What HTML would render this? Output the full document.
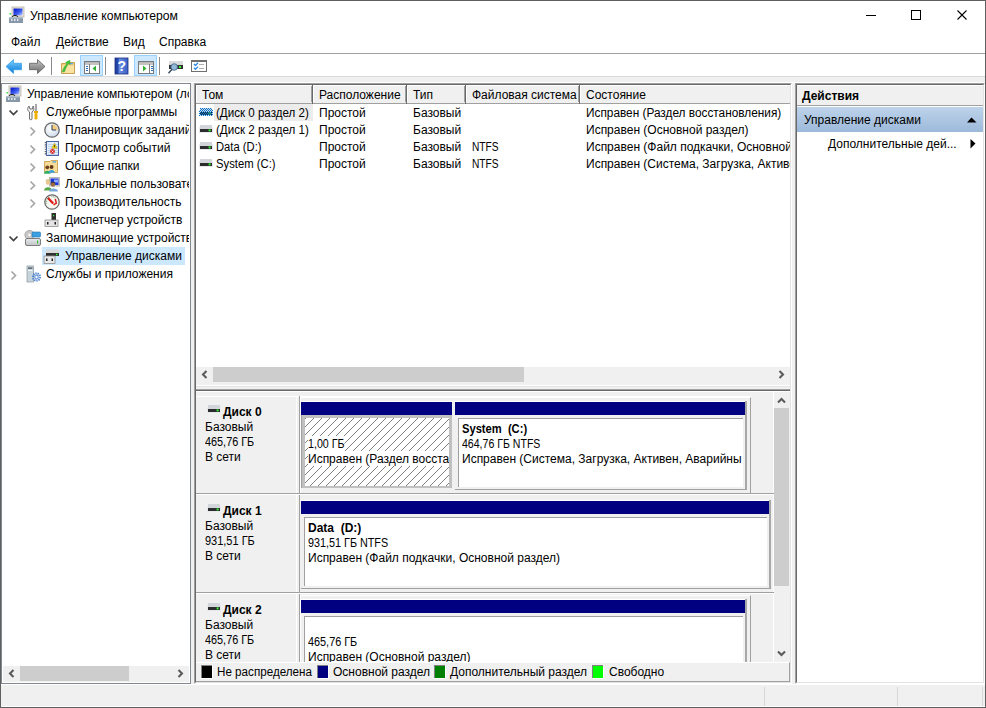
<!DOCTYPE html>
<html><head><meta charset="utf-8">
<style>
*{margin:0;padding:0;box-sizing:border-box}
html,body{width:986px;height:708px;overflow:hidden;background:#f0f0f0;font-family:"Liberation Sans",sans-serif;font-size:12px;color:#000}
.a{position:absolute}
.t{position:absolute;white-space:nowrap;line-height:14px}
.b{font-weight:bold}
.clip{position:absolute;overflow:hidden}
svg{position:absolute;overflow:visible}
</style></head><body>

<!-- ===== title/menu/toolbar ===== -->
<div class="a" style="left:0;top:0;width:986px;height:76px;background:#fff"></div>
<div class="a" style="left:0;top:76px;width:986px;height:1px;background:#dadada"></div>
<div class="t" style="left:30px;top:9px;transform:scaleX(1.017);transform-origin:0 0">Управление компьютером</div>
<div class="a" style="left:866px;top:15px;width:10px;height:1px;background:#000"></div>
<div class="a" style="left:911px;top:10px;width:10px;height:10px;border:1px solid #000"></div>
<svg style="left:957px;top:10px" width="10" height="10"><path d="M0.5 0.5L9.5 9.5M9.5 0.5L0.5 9.5" stroke="#000" stroke-width="1.1"/></svg>

<div class="t" style="left:11px;top:35px">Файл</div>
<div class="t" style="left:56px;top:35px">Действие</div>
<div class="t" style="left:123px;top:35px">Вид</div>
<div class="t" style="left:159px;top:35px">Справка</div>
<div class="a" style="left:0;top:53px;width:986px;height:1px;background:#a0a0a0"></div>

<!-- toolbar icons -->
<svg style="left:0;top:54px" width="220" height="22">
 <defs>
  <linearGradient id="gb" x1="0" y1="0" x2="0" y2="1"><stop offset="0" stop-color="#7cd0ff"/><stop offset="1" stop-color="#0a78d8"/></linearGradient>
  <linearGradient id="gg" x1="0" y1="0" x2="0" y2="1"><stop offset="0" stop-color="#c8c8c8"/><stop offset="1" stop-color="#6a6a6a"/></linearGradient>
  <linearGradient id="gh" x1="0" y1="0" x2="1" y2="0"><stop offset="0" stop-color="#1c3a9a"/><stop offset="0.25" stop-color="#2a4cb0"/><stop offset="0.3" stop-color="#6a8ee0"/><stop offset="1" stop-color="#3a60c8"/></linearGradient>
 </defs>
 <!-- back -->
 <path d="M6 12.5L13.5 5.5V9.3H21.5V15.7H13.5V19.5Z" fill="url(#gb)" stroke="#3aa0e8" stroke-width="0.8"/>
 <!-- forward -->
 <path d="M45 12.5L37.5 5.5V9.3H29.5V15.7H37.5V19.5Z" fill="url(#gg)" stroke="#606060" stroke-width="0.8"/>
 <rect x="51" y="3" width="1" height="18" fill="#8a8a8a"/>
 <!-- folder up -->
 <path d="M61.5 9.5H65.5L66.5 8.5H74.5V19.5H61.5Z" fill="#f0cf78" stroke="#c39a48" stroke-width="0.9"/>
 <rect x="62" y="11.5" width="12" height="7.5" fill="#f9e2a2"/>
 <rect x="70" y="9" width="3" height="1.3" fill="#5aa8f0"/>
 <path d="M62.3 17.8C63.2 14.5 64.8 12 67 9.8L65.6 8.6L69.8 6.2L70 10.6L68.6 9.6C67 11.5 65.6 14.2 64.5 17.8Z" fill="#3cc83c" stroke="#2a9a2a" stroke-width="0.5"/>
 <!-- highlighted btn 1 -->
 <rect x="80.5" y="1.5" width="22" height="20" fill="#cce8ff" stroke="#99d1ff"/>
 <rect x="84.5" y="7.5" width="15" height="12" fill="#fff" stroke="#7a7a7a"/>
 <rect x="85" y="8" width="14" height="1" fill="#b8b8b8"/><rect x="85" y="9.5" width="14" height="1" fill="#8a8a8a"/>
 <rect x="89" y="10" width="1" height="9" fill="#7a7a7a"/>
 <rect x="86" y="12" width="2" height="1" fill="#3070c0"/><rect x="86" y="14" width="2" height="1" fill="#3070c0"/><rect x="86" y="16" width="2" height="1" fill="#3070c0"/>
 <path d="M92.5 14.5L96 11.5V17.5Z" fill="#30b030"/>
 <rect x="105" y="3" width="1" height="18" fill="#8a8a8a"/>
 <!-- help -->
 <rect x="115" y="4" width="13" height="16" fill="url(#gh)" stroke="#1a2f80" stroke-width="0.8"/>
 <text x="121.8" y="17.3" font-family="Liberation Sans" font-weight="bold" font-size="14" fill="#fff" text-anchor="middle">?</text>
 <!-- highlighted btn 2 -->
 <rect x="134.5" y="1.5" width="22" height="20" fill="#cce8ff" stroke="#99d1ff"/>
 <rect x="138.5" y="7.5" width="15" height="12" fill="#fff" stroke="#7a7a7a"/>
 <rect x="139" y="8" width="14" height="1" fill="#b8b8b8"/><rect x="139" y="9.5" width="14" height="1" fill="#8a8a8a"/>
 <rect x="149" y="10" width="1" height="9" fill="#7a7a7a"/>
 <rect x="151" y="12" width="2" height="1" fill="#3070c0"/><rect x="151" y="14" width="2" height="1" fill="#3070c0"/><rect x="151" y="16" width="2" height="1" fill="#3070c0"/>
 <path d="M143 11.5L146.5 14.5L143 17.5Z" fill="#30b030"/>
 <rect x="159" y="3" width="1" height="18" fill="#8a8a8a"/>
 <!-- disk search -->
 <rect x="169" y="7" width="14" height="4" fill="#d8dadc"/>
 <rect x="169" y="11" width="14" height="4" fill="#303030"/>
 <rect x="179" y="12" width="2" height="2" fill="#30ff30"/>
 <circle cx="174.2" cy="13" r="3.3" fill="#90b8d8" stroke="#4a6a8a" stroke-width="0.9"/>
 <path d="M172 15.3L168.5 19.3" stroke="#3a4a5a" stroke-width="1.4"/>
 <!-- checklist -->
 <rect x="191.5" y="6.5" width="15" height="11" fill="#fff" stroke="#707070"/>
 <rect x="191" y="6" width="16" height="2" fill="#707070"/>
 <path d="M194 10L195.5 11.5L198 8.8M194 13.8L195.5 15.3L198 12.6" stroke="#2a8ae8" stroke-width="1.3" fill="none"/>
 <rect x="199" y="10" width="5" height="1" fill="#b0b0b0"/><rect x="199" y="14" width="5" height="1" fill="#b0b0b0"/>
</svg>
<!-- title icon -->
<svg style="left:8px;top:6px" width="18" height="18">
 <defs><linearGradient id="scr" x1="0" y1="0" x2="1" y2="1"><stop offset="0" stop-color="#0010c0"/><stop offset="0.6" stop-color="#4060f0"/><stop offset="1" stop-color="#c0d0ff"/></linearGradient></defs>
 <rect x="4" y="1" width="12" height="10" fill="#e8e4d8" stroke="#b8b4a8" stroke-width="0.8"/>
 <rect x="5.5" y="2.5" width="9" height="7" fill="url(#scr)"/>
 <rect x="1" y="11" width="14" height="6" fill="#8898a8"/>
 <rect x="1" y="11" width="14" height="1.5" fill="#b0c0cc"/>
 <rect x="3" y="13" width="1.5" height="2" fill="#e0e8f0"/><rect x="6" y="13" width="1.5" height="2" fill="#e0e8f0"/><rect x="9" y="13" width="1.5" height="2" fill="#e0e8f0"/>
 <rect x="1.5" y="7" width="1.5" height="1.5" fill="#40e040"/>
 <path d="M4 11C5 9 9 9 10 11" stroke="#101010" stroke-width="1" fill="none"/>
</svg>

<!-- ===== left tree pane ===== -->
<div class="a" style="left:0;top:82px;width:986px;height:1px;background:#fff"></div>
<div class="a" style="left:1px;top:83px;width:190px;height:601px;background:#fff;border:1px solid #828790"></div>
<div class="clip" style="left:2px;top:84px;width:187px;height:581px">
  <div class="a" style="left:40px;top:163px;width:143px;height:18px;background:#cce8ff"></div>
  <div class="t" style="left:25px;top:3px">Управление компьютером (локальным)</div>
  <div class="t" style="left:44px;top:21px">Служебные программы</div>
  <div class="t" style="left:63px;top:39px">Планировщик заданий</div>
  <div class="t" style="left:63px;top:57px">Просмотр событий</div>
  <div class="t" style="left:63px;top:75px">Общие папки</div>
  <div class="t" style="left:63px;top:93px">Локальные пользователи и группы</div>
  <div class="t" style="left:63px;top:111px">Производительность</div>
  <div class="t" style="left:63px;top:129px">Диспетчер устройств</div>
  <div class="t" style="left:44px;top:147px">Запоминающие устройства</div>
  <div class="t" style="left:63px;top:165px">Управление дисками</div>
  <div class="t" style="left:44px;top:183px">Службы и приложения</div>
</div>
<!-- tree icons -->
<svg style="left:0;top:0" width="190" height="290">
 <defs>
  <linearGradient id="scr2" x1="0" y1="0" x2="1" y2="1"><stop offset="0" stop-color="#0010c0"/><stop offset="0.6" stop-color="#4060f0"/><stop offset="1" stop-color="#c0d0ff"/></linearGradient>
  <radialGradient id="clk" cx="0.4" cy="0.4" r="0.7"><stop offset="0" stop-color="#ffffff"/><stop offset="1" stop-color="#c8d8e8"/></radialGradient>
  <linearGradient id="drv" x1="0" y1="0" x2="0" y2="1"><stop offset="0" stop-color="#e8eaec"/><stop offset="1" stop-color="#c0c4c8"/></linearGradient>
 </defs>
 <!-- row0 computer mgmt icon x6-22 y86-102 -->
 <g transform="translate(5,85)">
 <rect x="4" y="1" width="12" height="10" fill="#e8e4d8" stroke="#b8b4a8" stroke-width="0.8"/>
 <rect x="5.5" y="2.5" width="9" height="7" fill="url(#scr2)"/>
 <rect x="1" y="11" width="14" height="6" fill="#8898a8"/>
 <rect x="1" y="11" width="14" height="1.5" fill="#b0c0cc"/>
 <rect x="3" y="13" width="1.5" height="2" fill="#e0e8f0"/><rect x="6" y="13" width="1.5" height="2" fill="#e0e8f0"/><rect x="9" y="13" width="1.5" height="2" fill="#e0e8f0"/>
 <rect x="1.5" y="7" width="1.5" height="1.5" fill="#40e040"/>
 <path d="M4 11C5 9 9 9 10 11" stroke="#101010" stroke-width="1" fill="none"/>
 </g>
 <!-- chevrons down -->
 <path d="M9.5 110.5L13.5 114.5L17.5 110.5" stroke="#404040" stroke-width="1.7" fill="none"/>
 <path d="M9.5 236.5L13.5 240.5L17.5 236.5" stroke="#404040" stroke-width="1.7" fill="none"/>
 <!-- chevrons right -->
 <path d="M30.5 127.5L34.5 131.5L30.5 135.5" stroke="#a6a6a6" stroke-width="1.7" fill="none"/>
 <path d="M30.5 145.5L34.5 149.5L30.5 153.5" stroke="#a6a6a6" stroke-width="1.7" fill="none"/>
 <path d="M30.5 163.5L34.5 167.5L30.5 171.5" stroke="#a6a6a6" stroke-width="1.7" fill="none"/>
 <path d="M30.5 181.5L34.5 185.5L30.5 189.5" stroke="#a6a6a6" stroke-width="1.7" fill="none"/>
 <path d="M30.5 199.5L34.5 203.5L30.5 207.5" stroke="#a6a6a6" stroke-width="1.7" fill="none"/>
 <path d="M11.5 271.5L15.5 275.5L11.5 279.5" stroke="#a6a6a6" stroke-width="1.7" fill="none"/>
 <!-- tools icon -->
 <path d="M29 106C27 108 27.5 111 29.5 112V119C29.5 120 32 120 32 119V112C34 111 34.5 108 33 106L32.5 109H30L29 106Z" fill="#f4f4f4" stroke="#606060" stroke-width="0.9"/>
 <rect x="35.5" y="104" width="1" height="7" fill="#505050"/>
 <rect x="34" y="111" width="4" height="2" fill="#e8a800"/>
 <rect x="34.5" y="113" width="3" height="6.5" rx="1" fill="#f0b400"/>
 <!-- clock -->
 <circle cx="52" cy="130" r="7.2" fill="url(#clk)" stroke="#6a6a6a" stroke-width="1.3"/>
 <path d="M52 130V124.2A5.8 5.8 0 0 1 57.8 130Z" fill="#f4cc80"/>
 <path d="M52 125V130H56" stroke="#2a4060" stroke-width="1" fill="none"/>
 <!-- event viewer -->
 <rect x="46.5" y="141.5" width="12" height="14" fill="#e4eefa" stroke="#4a66a8"/>
 <path d="M48 144.5H58M48 146.5H58M48 148.5H58M48 150.5H58M48 152.5H58M48 154.5H58" stroke="#b8cce8" stroke-width="0.8"/>
 <path d="M45.5 142V155" stroke="#606060" stroke-width="1.6" stroke-dasharray="0.9 0.9"/>
 <path d="M54.5 143.2L57.2 148.3H51.8Z" fill="#f4d400" stroke="#b09000" stroke-width="0.5"/>
 <rect x="54.2" y="145" width="0.8" height="2.2" fill="#303030"/>
 <circle cx="52.5" cy="151.5" r="2.4" fill="#d82828"/>
 <path d="M51.5 150.5L53.5 152.5M53.5 150.5L51.5 152.5" stroke="#fff" stroke-width="0.7"/>
 <!-- shared folders -->
 <path d="M44.5 161.5H50L51 160.5H57.5V172.5H44.5Z" fill="#f6dc96" stroke="#c8a050" stroke-width="0.9"/>
 <rect x="52.5" y="161.3" width="3.5" height="1.2" fill="#3aa0f0"/>
 <circle cx="47.3" cy="167.3" r="1.9" fill="#704020"/>
 <path d="M44 173.8C44 169.8 50.6 169.8 50.6 173.8Z" fill="#30b060"/>
 <circle cx="51.6" cy="167" r="1.9" fill="#603818"/>
 <path d="M48.5 172.8C48.5 169 54.7 169 54.7 172.8Z" fill="#38a0e0"/>
 <!-- local users -->
 <rect x="49.5" y="177.5" width="10" height="8.5" fill="#e0ddd0" stroke="#b0b0a8" stroke-width="0.8"/>
 <rect x="50.5" y="178.5" width="8" height="6.5" fill="#1838e0"/>
 <rect x="54" y="179.5" width="4" height="3" fill="#90a8ff"/>
 <circle cx="48" cy="182.5" r="2.2" fill="#e8c890"/>
 <path d="M45.5 180.8C46.5 179.5 49.5 179.5 50.3 181" stroke="#c8b060" stroke-width="1" fill="none"/>
 <path d="M44 190.5C44 186 52 186 52 190.5Z" fill="#58a848"/>
 <circle cx="53" cy="184.5" r="2.2" fill="#9a6a40"/>
 <path d="M50.8 183.2C51.5 181.8 54.5 181.8 55.2 183.2" stroke="#403020" stroke-width="1" fill="none"/>
 <path d="M49 191.5C49 187.5 58 187.5 58 191.5Z" fill="#78a8d8"/>
 <!-- performance -->
 <circle cx="52" cy="202" r="7.2" fill="#f8f6f0" stroke="#6a6a6a" stroke-width="1.3"/>
 <path d="M47.8 197.8L53.2 203.5" stroke="#e01818" stroke-width="2.2"/>
 <path d="M55.3 199L56.3 203.2L53.5 204.8" stroke="#e01818" stroke-width="1.5" fill="none"/>
 <path d="M46.8 203.5A5.3 5.3 0 0 1 49.5 197.2M51.5 196.7A5.3 5.3 0 0 1 55.5 198" stroke="#509a68" stroke-width="1" fill="none" stroke-dasharray="0.8 0.8"/>
 <!-- device manager -->
 <rect x="51.5" y="213" width="4.5" height="7" fill="#303030"/>
 <rect x="53" y="215" width="1.2" height="1.2" fill="#30ff30"/>
 <rect x="45" y="220" width="13" height="6.5" fill="#e4e4e4" stroke="#909090" stroke-width="0.8"/>
 <rect x="47" y="222" width="1.5" height="2.5" fill="#202020"/><rect x="54.5" y="222" width="1.5" height="2.5" fill="#202020"/>
 <!-- storage -->
 <circle cx="29.5" cy="235" r="4.6" fill="#c8c8c8" stroke="#909090" stroke-width="0.7"/>
 <circle cx="29.5" cy="235" r="1.2" fill="#fff"/>
 <rect x="32" y="232" width="8.5" height="5" rx="1" fill="#3aa0e0" stroke="#2070b0" stroke-width="0.6"/>
 <rect x="25.5" y="238.5" width="15" height="7" rx="1.5" fill="url(#drv)" stroke="#707070" stroke-width="0.9"/>
 <rect x="37" y="240.5" width="1.2" height="3" fill="#30c030"/>
 <!-- disk mgmt (selected) -->
 <rect x="46" y="249.5" width="13" height="3.5" fill="#d8d8d8"/>
 <rect x="46" y="253" width="13" height="3" fill="#303030"/>
 <rect x="56" y="253.8" width="1.5" height="1.5" fill="#30ff30"/>
 <rect x="44" y="256" width="11" height="7.5" fill="#e8e8e8" stroke="#909090" stroke-width="0.8"/>
 <rect x="46" y="258.5" width="1.5" height="2.5" fill="#202020"/><rect x="51.5" y="258.5" width="1.5" height="2.5" fill="#202020"/>
 <!-- services -->
 <rect x="27" y="266" width="6.5" height="16" fill="#c8d4dc" stroke="#8898a0" stroke-width="0.7"/>
 <rect x="28" y="267.5" width="4.5" height="1.2" fill="#404850"/>
 <rect x="28" y="270" width="4.5" height="0.8" fill="#fff"/>
 <circle cx="36.5" cy="277" r="3.6" fill="none" stroke="#4a80d0" stroke-width="2" stroke-dasharray="1.3 0.9"/>
 <circle cx="36.5" cy="277" r="2.4" fill="#6a9ae0"/>
 <circle cx="36.5" cy="277" r="1.2" fill="#fff"/>
</svg>
<!-- left h scrollbar -->
<div class="a" style="left:3px;top:666px;width:186px;height:16px;background:#f0f0f0"></div>
<div class="a" style="left:20px;top:666px;width:109px;height:15px;background:#cdcdcd"></div>

<!-- ===== middle pane ===== -->
<div class="a" style="left:194px;top:83px;width:598px;height:601px;background:#fff;border:1px solid;border-color:#a0a0a0 #fff #fff #a0a0a0"><div class="a" style="left:0;top:0;right:0;bottom:0;border:1px solid;border-color:#696969 #e3e3e3 #e3e3e3 #696969"></div></div>
<!-- header -->
<div class="a" style="left:196px;top:85px;width:594px;height:19px;background:#f0f0f0;border-top:1px solid #fff;border-bottom:1px solid #696969"><div class="a" style="left:0;top:17px;width:594px;height:1px;background:#a0a0a0"></div></div>
<div class="a" style="left:196px;top:85px;width:1px;height:17px;background:#fff"></div>
<div class="a" style="left:311px;top:86px;width:1px;height:16px;background:#a0a0a0"></div>
<div class="a" style="left:312px;top:85px;width:1px;height:19px;background:#696969"></div>
<div class="a" style="left:313px;top:85px;width:1px;height:17px;background:#fff"></div>
<div class="a" style="left:405px;top:86px;width:1px;height:16px;background:#a0a0a0"></div>
<div class="a" style="left:406px;top:85px;width:1px;height:19px;background:#696969"></div>
<div class="a" style="left:407px;top:85px;width:1px;height:17px;background:#fff"></div>
<div class="a" style="left:464px;top:86px;width:1px;height:16px;background:#a0a0a0"></div>
<div class="a" style="left:465px;top:85px;width:1px;height:19px;background:#696969"></div>
<div class="a" style="left:466px;top:85px;width:1px;height:17px;background:#fff"></div>
<div class="a" style="left:578px;top:86px;width:1px;height:16px;background:#a0a0a0"></div>
<div class="a" style="left:579px;top:85px;width:1px;height:19px;background:#696969"></div>
<div class="a" style="left:580px;top:85px;width:1px;height:17px;background:#fff"></div>
<div class="t" style="left:202px;top:88px">Том</div>
<div class="t" style="left:319px;top:88px">Расположение</div>
<div class="t" style="left:413px;top:88px">Тип</div>
<div class="t" style="left:472px;top:88px">Файловая система</div>
<div class="t" style="left:586px;top:88px">Состояние</div>
<!-- rows -->
<div class="clip" style="left:196px;top:104px;width:594px;height:262px">
  <div class="a" style="left:18px;top:0;width:99px;height:17px;background:#ececec"></div>
  <div class="t" style="transform:scaleX(0.965);transform-origin:0 0;left:20px;top:2px">(Диск 0 раздел 2)</div>
  <div class="t" style="transform:scaleX(0.965);transform-origin:0 0;left:20px;top:19px">(Диск 2 раздел 1)</div>
  <div class="t" style="transform:scaleX(0.935);transform-origin:0 0;left:20px;top:36px">Data (D:)</div>
  <div class="t" style="transform:scaleX(0.94);transform-origin:0 0;left:20px;top:53px">System (C:)</div>
  <div class="t" style="left:123px;top:2px">Простой</div>
  <div class="t" style="left:123px;top:19px">Простой</div>
  <div class="t" style="left:123px;top:36px">Простой</div>
  <div class="t" style="left:123px;top:53px">Простой</div>
  <div class="t" style="left:217px;top:2px">Базовый</div>
  <div class="t" style="left:217px;top:19px">Базовый</div>
  <div class="t" style="left:217px;top:36px">Базовый</div>
  <div class="t" style="left:217px;top:53px">Базовый</div>
  <div class="t" style="transform:scaleX(0.85);transform-origin:0 0;left:276px;top:36px">NTFS</div>
  <div class="t" style="transform:scaleX(0.85);transform-origin:0 0;left:276px;top:53px">NTFS</div>
  <div class="t" style="transform:scaleX(0.985);transform-origin:0 0;left:390px;top:2px">Исправен (Раздел восстановления)</div>
  <div class="t" style="left:390px;top:19px">Исправен (Основной раздел)</div>
  <div class="t" style="left:390px;top:36px">Исправен (Файл подкачки, Основной раздел)</div>
  <div class="t" style="left:390px;top:53px">Исправен (Система, Загрузка, Активен, Аварийный дамп, Основной раздел)</div>
</div>
<!-- list h scrollbar -->
<div class="a" style="left:196px;top:367px;width:594px;height:18px;background:#f0f0f0"></div>
<div class="a" style="left:213px;top:367px;width:311px;height:15px;background:#cdcdcd"></div>
<div class="a" style="left:196px;top:385px;width:594px;height:1px;background:#fff"></div>
<div class="a" style="left:196px;top:386px;width:594px;height:1px;background:#e3e3e3"></div>
<div class="a" style="left:196px;top:387px;width:594px;height:2px;background:#f0f0f0"></div>
<div class="a" style="left:196px;top:389px;width:594px;height:1px;background:#a0a0a0"></div>
<div class="a" style="left:196px;top:390px;width:594px;height:1px;background:#696969"></div>
<div class="a" style="left:196px;top:391px;width:594px;height:1px;background:#fff"></div>
<div class="a" style="left:196px;top:392px;width:594px;height:290px;background:#f0f0f0"></div>

<!-- ===== disk view ===== -->
<div class="clip" style="left:196px;top:392px;width:578px;height:270px;background:#f0f0f0">
 <!-- row 0 -->
 <div class="a" style="left:0;top:4px;width:555px;height:1px;background:#fff"></div>
 <div class="a" style="left:577px;top:0;width:1px;height:270px;background:#fff"></div>
 <div class="a" style="left:100px;top:4px;width:1px;height:97px;background:#fff"></div>
 <div class="a" style="left:103px;top:4px;width:1px;height:97px;background:#a0a0a0"></div>
 <div class="a" style="left:0;top:101px;width:578px;height:1px;background:#a0a0a0"></div>
 <div class="a" style="left:0;top:102px;width:578px;height:1px;background:#fff"></div>
 <div class="a" style="left:104px;top:5px;width:451px;height:96px;border-left:1px solid #fff;border-top:1px solid #fff;border-right:1px solid #a0a0a0"></div>
 <!-- row 1 -->
 <div class="a" style="left:100px;top:103px;width:1px;height:97px;background:#fff"></div>
 <div class="a" style="left:103px;top:103px;width:1px;height:97px;background:#a0a0a0"></div>
 <div class="a" style="left:0;top:200px;width:578px;height:1px;background:#a0a0a0"></div>
 <div class="a" style="left:0;top:201px;width:578px;height:1px;background:#fff"></div>
 <div class="a" style="left:577px;top:103px;width:1px;height:97px;background:#fff"></div>
 <!-- row 2 -->
 <div class="a" style="left:100px;top:202px;width:1px;height:97px;background:#fff"></div>
 <div class="a" style="left:103px;top:202px;width:1px;height:97px;background:#a0a0a0"></div>
 <div class="a" style="left:104px;top:203px;width:451px;height:96px;border-left:1px solid #fff;border-top:1px solid #fff;border-right:1px solid #a0a0a0"></div>

 <!-- labels -->
 <div class="t b" style="left:27px;top:13px">Диск 0</div>
 <div class="t" style="left:9px;top:28px">Базовый</div>
 <div class="t" style="transform:scaleX(0.905);transform-origin:0 0;left:9px;top:43px">465,76 ГБ</div>
 <div class="t" style="left:9px;top:58px">В сети</div>
 <div class="t b" style="left:27px;top:112px">Диск 1</div>
 <div class="t" style="left:9px;top:127px">Базовый</div>
 <div class="t" style="transform:scaleX(0.915);transform-origin:0 0;left:9px;top:142px">931,51 ГБ</div>
 <div class="t" style="left:9px;top:157px">В сети</div>
 <div class="t b" style="left:27px;top:211px">Диск 2</div>
 <div class="t" style="left:9px;top:226px">Базовый</div>
 <div class="t" style="transform:scaleX(0.905);transform-origin:0 0;left:9px;top:241px">465,76 ГБ</div>
 <div class="t" style="left:9px;top:256px">В сети</div>

 <!-- disk0 p1 (selected hatched) -->
 <div class="a" style="left:104px;top:9px;width:153px;height:1px;background:#fff"></div>
 <div class="a" style="left:105px;top:10px;width:151px;height:13px;background:#000080"></div>
 <div class="a" style="left:105px;top:23px;width:151px;height:73px;background:#c0c0c0;border-left:1px solid #a0a0a0"></div>
 <svg style="left:109px;top:26px" width="144" height="68"><defs><pattern id="h" width="8" height="8" patternUnits="userSpaceOnUse" x="1" y="0"><g fill="#808080"><rect x="0" y="7" width="1" height="1"/><rect x="1" y="6" width="1" height="1"/><rect x="2" y="5" width="1" height="1"/><rect x="3" y="4" width="1" height="1"/><rect x="4" y="3" width="1" height="1"/><rect x="5" y="2" width="1" height="1"/><rect x="6" y="1" width="1" height="1"/><rect x="7" y="0" width="1" height="1"/></g></pattern></defs><rect width="144" height="68" fill="#fff"/><rect width="144" height="68" fill="url(#h)"/></svg>
 <div class="clip" style="left:109px;top:26px;width:144px;height:68px">
  <div class="t" style="transform:scaleX(0.89);transform-origin:0 0;left:3px;top:18px;padding-top:1px;height:15px;background:#fff">1,00 ГБ</div>
  <div class="t" style="left:3px;top:33px;padding-top:1px;height:15px;background:#fff">Исправен (Раздел восстановления)</div>
 </div>
 <!-- disk0 p2 -->
 <div class="a" style="left:258px;top:9px;width:292px;height:1px;background:#fff"></div>
 <div class="a" style="left:259px;top:10px;width:290px;height:13px;background:#000080"></div>
 <div class="a" style="left:549px;top:9px;width:2px;height:89px;background:#a8a8a8"></div>
 <div class="a" style="left:259px;top:97px;width:292px;height:1px;background:#a0a0a0"></div>
 <div class="a" style="left:262px;top:26px;width:285px;height:69px;background:#fff;border-left:1px solid #a0a0a0;border-top:1px solid #a0a0a0"></div>
 <div class="clip" style="left:263px;top:27px;width:284px;height:68px">
  <div class="t b" style="transform:scaleX(0.93);transform-origin:0 0;left:3px;top:3px">System&nbsp; (C:)</div>
  <div class="t" style="transform:scaleX(0.88);transform-origin:0 0;left:3px;top:18px">464,76 ГБ NTFS</div>
  <div class="t" style="left:3px;top:33px">Исправен (Система, Загрузка, Активен, Аварийны</div>
 </div>
 <!-- disk1 p1 -->
 <div class="a" style="left:104px;top:108px;width:470px;height:1px;background:#fff"></div>
 <div class="a" style="left:105px;top:109px;width:468px;height:13px;background:#000080"></div>
 <div class="a" style="left:573px;top:108px;width:2px;height:89px;background:#a8a8a8"></div>
 <div class="a" style="left:105px;top:196px;width:470px;height:1px;background:#a0a0a0"></div>
 <div class="a" style="left:108px;top:125px;width:463px;height:69px;background:#fff;border-left:1px solid #a0a0a0;border-top:1px solid #a0a0a0"></div>
 <div class="clip" style="left:109px;top:126px;width:462px;height:68px">
  <div class="t b" style="left:3px;top:3px">Data&nbsp; (D:)</div>
  <div class="t" style="transform:scaleX(0.9);transform-origin:0 0;left:3px;top:18px">931,51 ГБ NTFS</div>
  <div class="t" style="left:3px;top:33px">Исправен (Файл подкачки, Основной раздел)</div>
 </div>
 <!-- disk2 p1 -->
 <div class="a" style="left:104px;top:207px;width:446px;height:1px;background:#fff"></div>
 <div class="a" style="left:105px;top:208px;width:444px;height:13px;background:#000080"></div>
 <div class="a" style="left:549px;top:207px;width:2px;height:89px;background:#a8a8a8"></div>
 <div class="a" style="left:108px;top:224px;width:439px;height:69px;background:#fff;border-left:1px solid #a0a0a0;border-top:1px solid #a0a0a0"></div>
 <div class="clip" style="left:109px;top:225px;width:438px;height:68px">
  <div class="t" style="transform:scaleX(0.905);transform-origin:0 0;left:3px;top:18px">465,76 ГБ</div>
  <div class="t" style="left:3px;top:33px">Исправен (Основной раздел)</div>
 </div>
</div>
<!-- v scrollbar -->
<div class="a" style="left:774px;top:392px;width:16px;height:270px;background:#f0f0f0"></div>
<div class="a" style="left:774px;top:408px;width:15px;height:178px;background:#cdcdcd"></div>
<!-- legend -->
<div class="a" style="left:196px;top:662px;width:594px;height:20px;background:#f0f0f0;border-top:1px solid #fff;border-bottom:1px solid #a0a0a0;border-right:1px solid #a0a0a0"></div>
<div class="a" style="left:201px;top:665px;width:12px;height:14px;background:#000;border-right:1px solid #fff;border-bottom:1px solid #fff;box-shadow:inset 1px 1px 0 #808080"></div>
<div class="t" style="transform:scaleX(0.97);transform-origin:0 0;left:217px;top:665px">Не распределена</div>
<div class="a" style="left:317px;top:665px;width:12px;height:14px;background:#000080;border-right:1px solid #fff;border-bottom:1px solid #fff;box-shadow:inset 1px 1px 0 #808080"></div>
<div class="t" style="left:333px;top:665px">Основной раздел</div>
<div class="a" style="left:434px;top:665px;width:12px;height:14px;background:#008000;border-right:1px solid #fff;border-bottom:1px solid #fff;box-shadow:inset 1px 1px 0 #808080"></div>
<div class="t" style="left:450px;top:665px">Дополнительный раздел</div>
<div class="a" style="left:592px;top:665px;width:12px;height:14px;background:#00ff00;border-right:1px solid #fff;border-bottom:1px solid #fff;box-shadow:inset 1px 1px 0 #808080"></div>
<div class="t" style="left:609px;top:665px">Свободно</div>

<!-- list icons, disk icons, scroll arrows -->
<svg style="left:0;top:0" width="986" height="708">
 <defs>
  <linearGradient id="dt" x1="0" y1="0" x2="0" y2="1"><stop offset="0" stop-color="#f0f2f4"/><stop offset="1" stop-color="#c4c8cc"/></linearGradient>
  <pattern id="dith" width="2" height="2" patternUnits="userSpaceOnUse"><rect width="1" height="1" fill="#0078d7"/><rect x="1" y="1" width="1" height="1" fill="#0078d7"/></pattern>
 </defs>
 <!-- list row0 icon (selected, dithered blue) -->
 <use href="#drvicon" y="-17"/>
 <path d="M200 108H212V110H213V116H199V110H200Z" fill="url(#dith)"/>
 <!-- list rows 1-3 -->
 <g id="drvicon">
 <rect x="199" y="127" width="14" height="6" rx="0.5" fill="#e6eaee"/>
 <rect x="200" y="125" width="12" height="4" fill="#d2d6da"/>
 <rect x="200" y="129" width="12" height="3" fill="#2c2c2c"/>
 <rect x="208.6" y="129.4" width="2" height="2" fill="#30f030"/>
 </g>
 <use href="#drvicon" y="17"/>
 <use href="#drvicon" y="34"/>
 <!-- disk label icons -->
 <use href="#drvicon" x="8" y="280"/>
 <use href="#drvicon" x="8" y="379"/>
 <use href="#drvicon" x="8" y="478"/>
 <!-- scroll arrows -->
 <path d="M206.5 371L203 374.5L206.5 378" stroke="#5a5a5a" stroke-width="2.1" fill="none"/>
 <path d="M779.5 371L783 374.5L779.5 378" stroke="#5a5a5a" stroke-width="2.1" fill="none"/>
 <path d="M778 402.5L781.5 399L785 402.5" stroke="#5a5a5a" stroke-width="2.1" fill="none"/>
 <path d="M778 651.5L781.5 655L785 651.5" stroke="#5a5a5a" stroke-width="2.1" fill="none"/>
 <path d="M13.5 670L10 673.5L13.5 677" stroke="#5a5a5a" stroke-width="2.1" fill="none"/>
 <path d="M178.5 670L182 673.5L178.5 677" stroke="#5a5a5a" stroke-width="2.1" fill="none"/>
</svg>

<!-- ===== right pane ===== -->
<div class="a" style="left:795px;top:83px;width:190px;height:601px;background:#fff;border:1px solid;border-color:#a0a0a0 #fff #fff #a0a0a0"><div class="a" style="left:0;top:0;right:0;bottom:0;border:1px solid;border-color:#696969 #e3e3e3 #e3e3e3 #696969"></div></div>
<div class="a" style="left:797px;top:85px;width:186px;height:21px;background:#f0f0f0;border-top:1px solid #fff;border-bottom:1px solid #a0a0a0"></div>
<div class="a" style="left:797px;top:106px;width:186px;height:1px;background:#fff"></div>
<div class="t b" style="left:802px;top:89px">Действия</div>
<div class="a" style="left:797px;top:107px;width:186px;height:25px;background:linear-gradient(#bdd3ea,#9db9da)"></div>
<div class="t" style="left:804px;top:113px">Управление дисками</div>
<svg style="left:967px;top:117px" width="10" height="6"><path d="M0 5.5L4.5 0.5L9.5 5.5Z" fill="#000"/></svg>
<div class="t" style="left:828px;top:137px">Дополнительные дей...</div>
<svg style="left:970px;top:139px" width="6" height="10"><path d="M0.5 0L5.5 4.5L0.5 9.5Z" fill="#000"/></svg>

<!-- status bar -->
<div class="a" style="left:0;top:684px;width:986px;height:1px;background:#fff"></div>
<div class="a" style="left:764px;top:687px;width:1px;height:19px;background:#d7d7d7"></div>
<div class="a" style="left:897px;top:687px;width:1px;height:19px;background:#d7d7d7"></div>
<div class="a" style="left:982px;top:687px;width:1px;height:19px;background:#d7d7d7"></div>
<div class="a" style="left:0;top:706px;width:986px;height:1px;background:#fff"></div>

<!-- window border -->
<div class="a" style="left:0;top:0;width:986px;height:708px;border:1px solid #5f5f5f"></div>

</body></html>
